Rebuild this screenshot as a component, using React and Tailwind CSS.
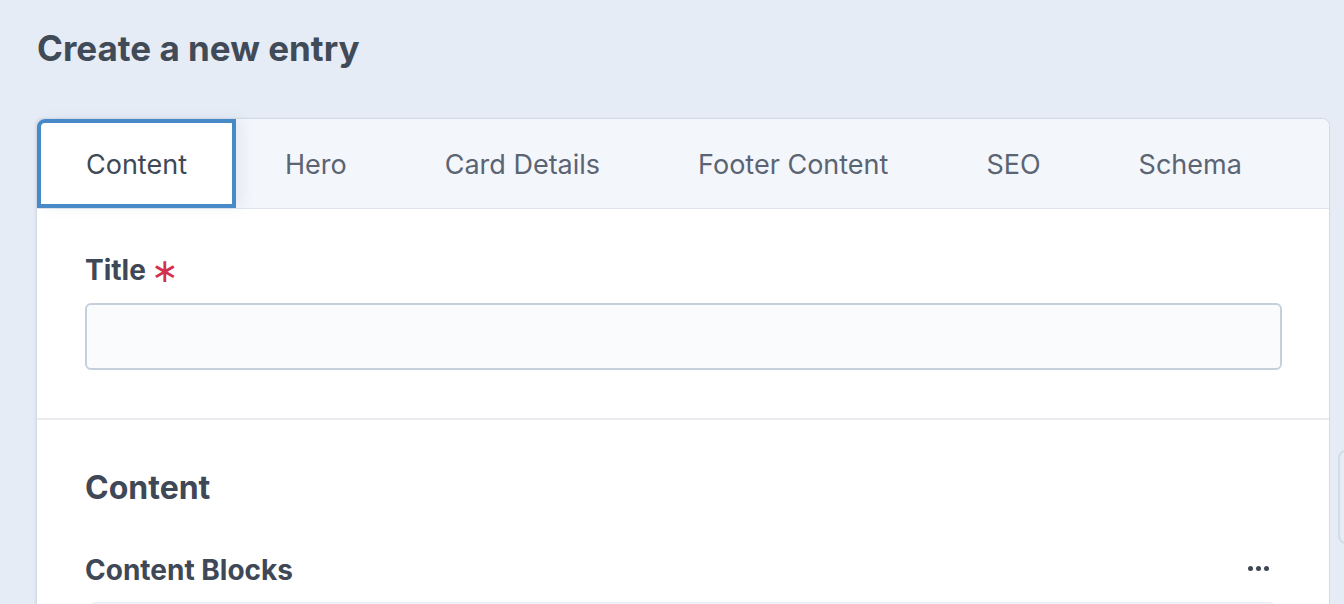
export default function App() {
  const tabs = ['Content', 'Hero', 'Card Details', 'Footer Content', 'SEO', 'Schema']

  return (
    <div
      className="h-screen w-full overflow-hidden bg-[#e5ecf6] text-[#3f4856]"
      style={{ fontFamily: 'Inter, "Noto Sans", sans-serif' }}
    >
      <h1 className="pl-[37px] pt-[28px] text-[35px] leading-[40px] font-bold text-[#414a57]">
        Create a new entry
      </h1>

      <div className="mt-[50px] flex items-start gap-[8px] pl-[36px]">
        {/* main card */}
        <div className="w-[1294px] shrink-0 rounded-lg border border-[#d3dbe7] bg-white shadow-[-1px_0_2px_rgba(60,80,110,0.08)]">
          {/* tabs */}
          <div className="flex h-[90px] rounded-t-lg border-b border-[#dfe4ec] bg-[#f3f6fb]">
            {tabs.map((t, i) =>
              i === 0 ? (
                <div
                  key={t}
                  className="relative z-10 flex h-[89px] items-center rounded-tl-lg border-[4px] border-[#4889c7] bg-white px-[45px] pt-[4px] text-[27px] text-[#3f4856] shadow-[6px_0_14px_rgba(80,100,130,0.08)]"
                >
                  {t}
                </div>
              ) : (
                <div
                  key={t}
                  className="flex h-[89px] items-center px-[49px] pt-[4px] text-[27px] text-[#5b6473]"
                >
                  {t}
                </div>
              )
            )}
          </div>

          {/* title field */}
          <div className="px-[48px] pt-[45px] pb-[48px]">
            <label className="mb-[17px] flex items-center gap-[5px] text-[28px] leading-[32px] font-bold text-[#3f4856]">
              Title
              <span className="text-[33px] leading-[32px] font-normal text-[#d3304b]">∗</span>
            </label>
            <div className="h-[67px] w-[1197px] rounded-md border-2 border-[#c6d0dd] bg-[#fafbfd]" />
          </div>

          <div className="border-t-2 border-[#eaecef]" />

          {/* content section */}
          <div className="px-[48px] pt-[50px] pb-[40px]">
            <h2 className="text-[32px] leading-[36px] font-bold text-[#3f4856]">Content</h2>
            <div className="mt-[48px] flex w-[1197px] items-center justify-between">
              <span className="text-[28px] leading-[32px] font-bold text-[#3f4856]">Content Blocks</span>
              <div className="mr-[13px] mt-[-4px] flex items-center gap-[3px]">
                <span className="h-[5px] w-[5px] rounded-full bg-[#3f4856]" />
                <span className="h-[5px] w-[5px] rounded-full bg-[#3f4856]" />
                <span className="h-[5px] w-[5px] rounded-full bg-[#3f4856]" />
              </div>
            </div>
            <div className="mt-[16px] ml-[3px] h-[120px] w-[1189px] rounded-lg border border-[#e6edf5] bg-[#f2f6fb]" />
          </div>
        </div>

        {/* side panel peeking in */}
        <div className="mt-[332px] h-[94px] w-[40px] shrink-0 rounded-lg border-2 border-[#d3dbe6] bg-[#e7edf6]" />
      </div>
    </div>
  )
}
